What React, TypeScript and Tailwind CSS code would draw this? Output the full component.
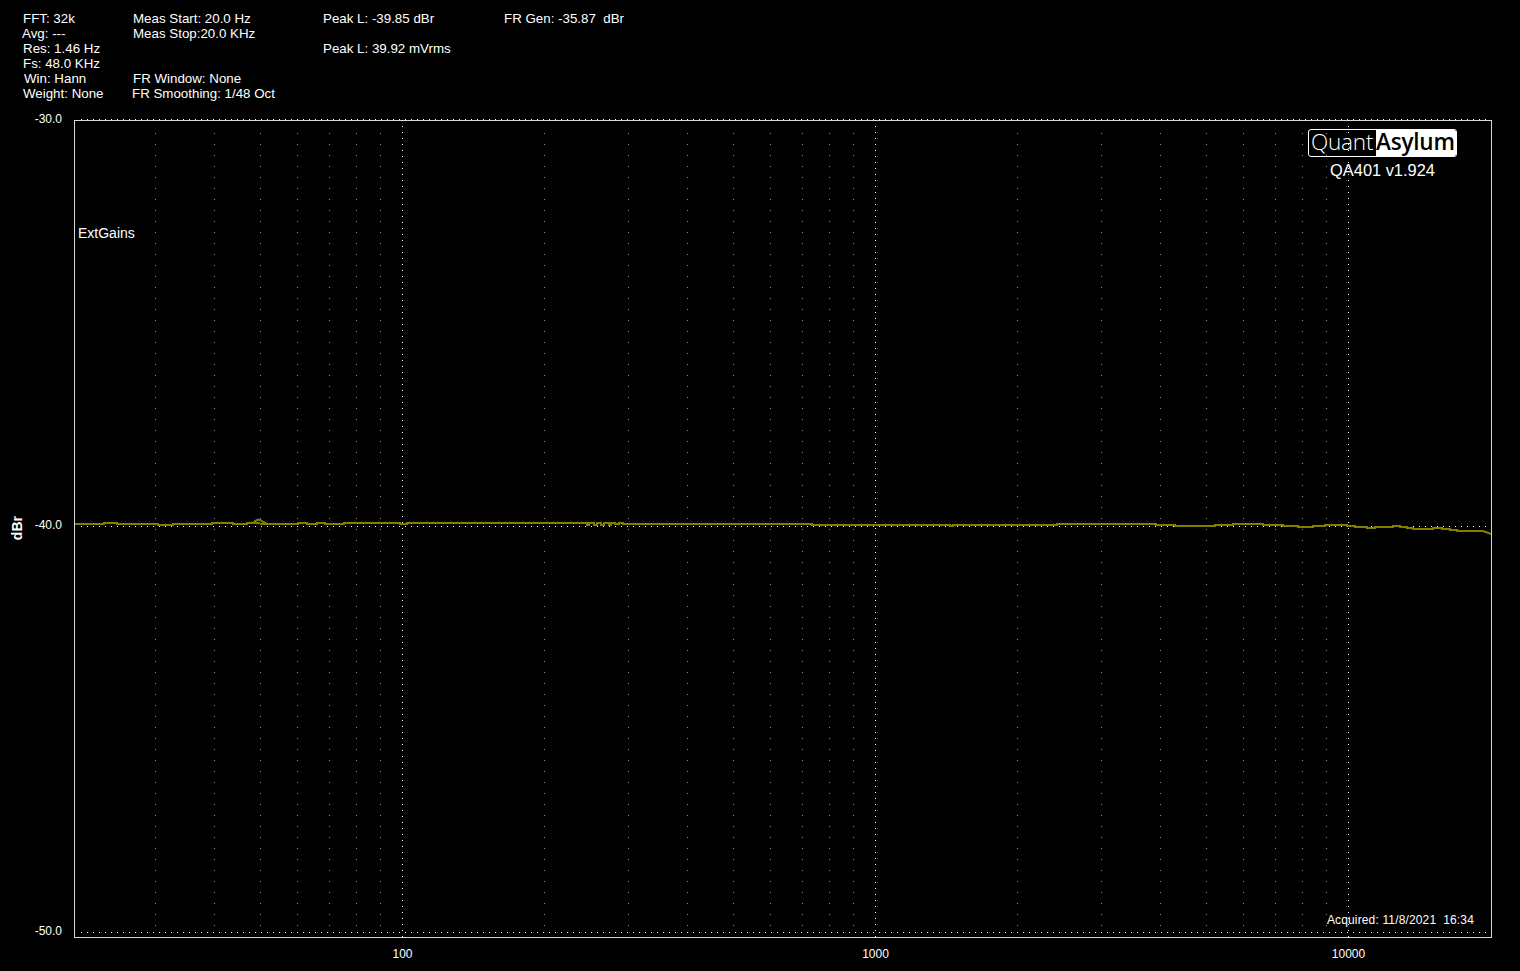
import React from "react";

const X_100 = 402.5;
const DECADE = 473;

// x position of a frequency on the log axis
const freqX = (f: number) => Math.round(X_100 + DECADE * Math.log10(f / 100) - 0.5) + 0.5;

const majorFreqs = [100, 1000, 10000];
const minorFreqs = [30, 40, 50, 60, 70, 80, 90].flatMap((f) => [f, f * 10, f * 100]).concat([200, 2000]);

// flat runs of the trace: [x start, x end, y]
const traceRuns: number[][] = [
  [75, 104, 524], [104, 117, 523], [117, 158, 524], [158, 173, 525], [173, 212, 524], [212, 233, 523],
  [233, 247, 524], [247, 253, 523], [267, 298, 524], [298, 307, 523], [307, 317, 524], [317, 325, 523],
  [325, 344, 524], [344, 400, 523], [400, 407, 524], [407, 587, 523], [587, 589, 525], [589, 594, 523],
  [594, 597, 525], [597, 601, 523], [601, 604, 525], [604, 609, 523], [609, 611, 525], [611, 615, 523],
  [615, 619, 524], [619, 623, 523], [623, 628, 524], [628, 812, 524], [812, 950, 525], [950, 953, 526],
  [953, 1057, 525], [1057, 1156, 524], [1156, 1175, 525], [1175, 1215, 526], [1215, 1233, 525],
  [1233, 1263, 524], [1263, 1283, 525], [1283, 1298, 526], [1298, 1313, 527], [1313, 1325, 526],
  [1325, 1347, 525], [1347, 1355, 526], [1355, 1367, 527], [1367, 1375, 528], [1375, 1393, 527],
  [1393, 1400, 526], [1400, 1407, 527], [1407, 1413, 528], [1413, 1433, 529], [1433, 1442, 528],
  [1442, 1450, 529], [1450, 1457, 530], [1457, 1468, 531], [1468, 1483, 531],
];

const tracePoints = traceRuns.map(([a, b, y]) => `${a},${y} ${b},${y}`).join(" ");
const bumpPoints = "247,523 253,523 255,521 258,519.5 260,520 263,522 267,524";
const tailPoints = "1483,531 1491,534";

const Line = ({ children, className = "" }: { children?: React.ReactNode; className?: string }) => (
  <div className={`h-[15px] leading-[15px] whitespace-pre ${className}`}>{children}</div>
);

const Header = () => (
  <div className="flex h-[120px] pt-[11px] pl-[23px] text-[13.33px]">
    <div className="w-[110px]">
      <Line>FFT: 32k</Line>
      <Line className="-ml-px">Avg: ---</Line>
      <Line>Res: 1.46 Hz</Line>
      <Line>Fs: 48.0 KHz</Line>
      <Line className="ml-px">Win: Hann</Line>
      <Line>Weight: None</Line>
    </div>
    <div className="w-[190px]">
      <Line>Meas Start: 20.0 Hz</Line>
      <Line>Meas Stop:20.0 KHz</Line>
      <Line />
      <Line />
      <Line>FR Window: None</Line>
      <Line className="-ml-px">FR Smoothing: 1/48 Oct</Line>
    </div>
    <div className="w-[181px]">
      <Line>Peak L: -39.85 dBr</Line>
      <Line />
      <Line>Peak L: 39.92 mVrms</Line>
    </div>
    <div>
      <Line>FR Gen: -35.87  dBr</Line>
    </div>
  </div>
);

const YAxis = () => (
  <div className="flex h-[827px] w-[74px] shrink-0 -mt-[8px] items-center text-[12px]">
    <div className="ml-[10px] mt-[6px] text-[14px] font-bold leading-[14px] [writing-mode:vertical-rl] rotate-180">dBr</div>
    <div className="ml-auto mr-[12px] flex h-full flex-col justify-between text-right leading-[15px]">
      <span>-30.0</span>
      <span>-40.0</span>
      <span>-50.0</span>
    </div>
  </div>
);

const PlotDrawing = () => (
  <svg
    className="absolute -left-px -top-px h-[818px] w-[1418px] overflow-visible"
    viewBox="74 120 1418 818"
    shapeRendering="crispEdges"
    fill="none"
  >
    {[119.5, 526.5, 932.5].map((y) => (
      <line key={y} x1="81" x2="1488" y1={y} y2={y} stroke="#ffffff" strokeDasharray="1 5" />
    ))}
    {minorFreqs.map((f) => (
      <line key={f} x1={freqX(f)} x2={freqX(f)} y1="133" y2="932" stroke="#8c8c8c" strokeDasharray="1 10" />
    ))}
    {majorFreqs.map((f) => (
      <line key={f} x1={freqX(f)} x2={freqX(f)} y1="120" y2="937" stroke="#ffffff" strokeDasharray="1 5" />
    ))}
    <polyline points={tracePoints} stroke="#808000" strokeWidth="2" strokeLinejoin="round" />
    <polyline points={bumpPoints} stroke="#808000" strokeWidth="2" shapeRendering="auto" />
    <polyline points={tailPoints} stroke="#808000" strokeWidth="2" shapeRendering="auto" />
  </svg>
);

const Logo = () => (
  <div className="flex h-[28px] w-[149px] rounded-[3px] border border-white font-['Open_Sans',sans-serif] text-[22.5px]">
    <div className="w-[67px] pl-[2px] font-light leading-[23px] tracking-[-0.2px] whitespace-nowrap">Quant</div>
    <div className="flex-1 rounded-r-[2px] bg-white font-semibold leading-[23px] tracking-[-0.2px] whitespace-nowrap text-black">Asylum</div>
  </div>
);

const Plot = () => (
  <div className="relative h-[818px] w-[1418px] shrink-0 border border-[#d8d8d8]">
    <PlotDrawing />
    <div className="absolute left-[3px] top-[104px] text-[14px] leading-[17px]">ExtGains</div>
    <div className="absolute right-[34px] top-[8px] flex flex-col items-center">
      <Logo />
      <div className="mt-[4px] text-[16.4px] leading-[18px]">QA401 v1.924</div>
    </div>
    <div className="absolute bottom-[9px] right-[17px] whitespace-pre text-[12px] tracking-[0.15px] leading-[15px]">
      Acquired: 11/8/2021  16:34
    </div>
  </div>
);

export default function App() {
  return (
    <div className="h-[971px] w-[1520px] overflow-hidden bg-black font-['Liberation_Sans',Arial,sans-serif] text-white">
      <Header />
      <div className="flex items-start">
        <YAxis />
        <Plot />
      </div>
      <div className="mt-[8px] ml-[166px] flex text-[12px] leading-[15px]">
        {majorFreqs.map((f) => (
          <div key={f} className="w-[473px] shrink-0 text-center">
            {f}
          </div>
        ))}
      </div>
    </div>
  );
}
